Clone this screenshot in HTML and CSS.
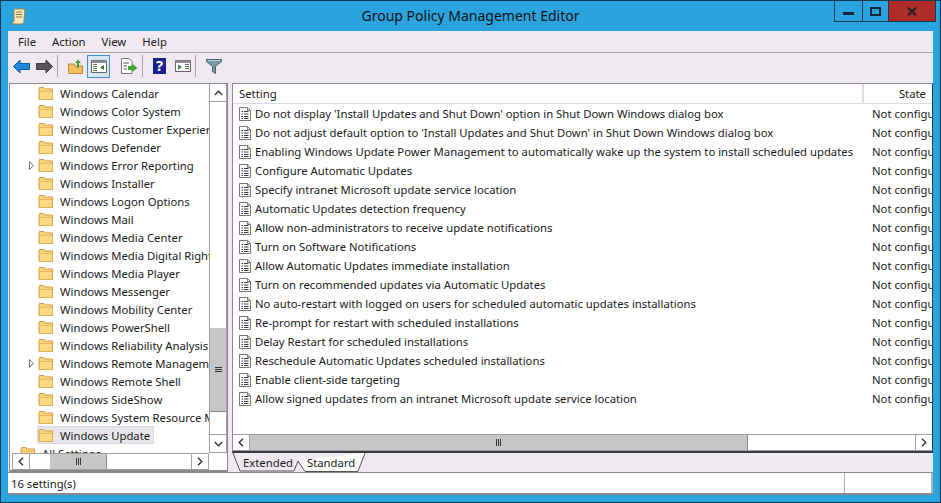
FILE: index.html
```html
<!DOCTYPE html>
<html lang="en">
<head>
	<title>Group Policy Management Editor</title>
	<meta charset="UTF-8">
	<link rel="stylesheet" href="styles.css">
</head>
<body>

<svg class="defs" width="0" height="0">
	<symbol id="folder" viewBox="0 0 16 15">
		<path d="M1 3.5 L1.5 1.5 H6 L7 3 H14.5 V13.5 H1 Z" fill="#f6d27a" stroke="#cf9f3c"/>
		<path d="M1.5 5.5 H14.5 V13.5 H1.5 Z" fill="#fbd883" stroke="#d8a845" stroke-width=".6"/>
	</symbol>
	<symbol id="setting" viewBox="0 0 12 14">
		<path d="M.5 .5 H8.5 L11.5 3.5 V13.5 H.5 Z M8.5 .5 V3.5 H11.5" fill="#fff" stroke="#77777d"/>
		<path d="M2.5 4.5 H4 M5 4.5 H9.5 M2.5 7 H4 M5 7 H9.5 M2.5 9.5 H4 M5 9.5 H9.5 M2.5 11.5 H4 M5 11.5 H9.5" stroke="#3c3c46" stroke-width="1.1"/>
	</symbol>
</svg>

<div class="window">
	<header class="titlebar">
		<svg class="app-icon" width="16" height="18" viewBox="0 0 16 18">
			<path d="M3 1 H14 L13 12 Q13 15 11 16 H2 Q1 14 3 13 Z" fill="#f7e9b8" stroke="#a08a50"/>
			<path d="M5 4 H11 M5 6.5 H11 M5 9 H11" stroke="#8a7a50"/>
		</svg>
		<h1 class="title">Group Policy Management Editor</h1>
		<div class="controls">
			<div class="ctl"><span class="min-glyph"></span></div>
			<div class="ctl ctl-max"><span class="max-glyph"></span></div>
			<div class="ctl ctl-close">
				<svg width="10" height="9" viewBox="0 0 10 9"><path d="M1 .5 L9 8.5 M9 .5 L1 8.5" stroke="#222" stroke-width="2.2"/></svg>
			</div>
		</div>
	</header>

	<div class="client">
		<nav class="menubar">
			<span>File</span><span>Action</span><span>View</span><span>Help</span>
		</nav>

		<div class="toolbar">
			<svg class="tool t-back" width="17" height="15" viewBox="0 0 17 15"><path d="M.5 7.5 L7 1 V4.5 H16.5 V10.5 H7 V14 Z" fill="#1f86d8" stroke="#0f5aa8"/></svg>
			<svg class="tool t-fwd" width="17" height="15" viewBox="0 0 17 15"><path d="M16.5 7.5 L10 1 V4.5 H.5 V10.5 H10 V14 Z" fill="#55555a" stroke="#3a3a3e"/></svg>
			<i class="sep"></i>
			<svg class="tool t-up" width="15" height="15" viewBox="0 0 15 15"><path d="M.5 5 H6 L7 7 H14.5 V14.5 H.5 Z" fill="#f2c260" stroke="#b98b30"/><path d="M9 10 V4 H7 L10 .5 L13 4 H11 V8 Z" fill="#3f9a33"/></svg>
			<div class="tool-on">
				<svg width="16" height="13" viewBox="0 0 16 13"><path d="M.5 .5 H15.5 V12.5 H.5 Z" fill="#fff" stroke="#666"/><path d="M.5 .5 H15.5 V3 H.5 Z" fill="#8c8c92"/><path d="M2 4.5 H6 M2 6.5 H6 M2 8.5 H6 M2 10.5 H6" stroke="#5b8a58"/><path d="M13 5 V10 L9 7.5 Z" fill="#3a7a3a"/></svg>
			</div>
			<svg class="tool t-export" width="17" height="16" viewBox="0 0 17 16"><path d="M.5 .5 H8 L11 3.5 V15.5 H.5 Z" fill="#fff" stroke="#777"/><path d="M2.5 5 H8 M2.5 8 H6 M2.5 11 H6" stroke="#555"/><path d="M7 8 H11 V5.5 L16.5 10 L11 14 V12 H7 Z" fill="#3ea82f"/></svg>
			<i class="sep"></i>
			<svg class="tool t-help" width="13" height="16" viewBox="0 0 13 16"><path d="M0 0 H13 V16 H0 Z" fill="#17208c"/><text x="6.5" y="13" class="help-q">?</text></svg>
			<svg class="tool t-sheet" width="16" height="12" viewBox="0 0 16 12"><path d="M.5 .5 H15.5 V11.5 H.5 Z" fill="#fff" stroke="#666"/><path d="M.5 .5 H15.5 V3 H.5 Z" fill="#8c8c92"/><path d="M10 4.5 H14 M10 6.5 H14 M10 8.5 H14" stroke="#666"/><path d="M3 4.5 V9.5 L7 7 Z" fill="#3a7a3a"/></svg>
			<i class="sep"></i>
			<svg class="tool t-filter" width="16" height="15" viewBox="0 0 16 15"><path d="M.5 .5 H15.5 V2.5 L9.5 7.5 V14.5 L6.5 12.5 V7.5 L.5 2.5 Z" fill="#7a98a6" stroke="#46626e"/><path d="M2 1.5 H14" stroke="#c3d3da"/></svg>
		</div>

		<div class="panes">
			<section class="tree-pane">
				<div class="tree-main">
					<ul class="tree" id="tree"></ul>
					<div class="vscroll">
						<div class="sb-btn sb-top"><svg width="9" height="6" viewBox="0 0 9 6"><path d="M.8 5 L4.5 1.2 L8.2 5" fill="none" stroke="#333" stroke-width="1.4"/></svg></div>
						<div class="vtrack">
							<div class="vthumb"><b class="grip-h"></b><b class="grip-h"></b><b class="grip-h"></b></div>
						</div>
						<div class="sb-btn sb-bot"><svg width="9" height="6" viewBox="0 0 9 6"><path d="M.8 1 L4.5 4.8 L8.2 1" fill="none" stroke="#333" stroke-width="1.4"/></svg></div>
					</div>
				</div>
				<div class="hscroll tree-hscroll">
					<div class="sb-btn sb-side"><svg width="6" height="9" viewBox="0 0 6 9"><path d="M5 .8 L1.2 4.5 L5 8.2" fill="none" stroke="#333" stroke-width="1.4"/></svg></div>
					<div class="htrack">
						<div class="hthumb tree-thumb"><b class="grip-v"></b><b class="grip-v"></b><b class="grip-v"></b></div>
					</div>
					<div class="sb-btn sb-side sb-right"><svg width="6" height="9" viewBox="0 0 6 9"><path d="M1 .8 L4.8 4.5 L1 8.2" fill="none" stroke="#333" stroke-width="1.4"/></svg></div>
				</div>
			</section>

			<section class="list-col">
				<div class="list-pane">
					<div class="list-head">
						<div class="col-setting">Setting</div>
						<div class="col-state">State</div>
					</div>
					<div class="list-rows" id="rows"></div>
					<div class="hscroll list-hscroll">
						<div class="sb-btn sb-side"><svg width="6" height="9" viewBox="0 0 6 9"><path d="M5 .8 L1.2 4.5 L5 8.2" fill="none" stroke="#333" stroke-width="1.4"/></svg></div>
						<div class="htrack">
							<div class="hthumb list-thumb"><b class="grip-v"></b><b class="grip-v"></b><b class="grip-v"></b></div>
						</div>
						<div class="sb-btn sb-side sb-right"><svg width="6" height="9" viewBox="0 0 6 9"><path d="M1 .8 L4.8 4.5 L1 8.2" fill="none" stroke="#333" stroke-width="1.4"/></svg></div>
					</div>
				</div>
				<div class="tabs">
					<svg class="tabs-svg" width="140" height="19" viewBox="0 0 140 19">
						<path d="M1 0 L8 18 H62 L66 8 L70 13" fill="none" stroke="#555"/>
						<path d="M66 8 L73 18.5 H126 L133 0" fill="#fff" stroke="#555"/>
						<text x="11" y="14" class="tab-text">Extended</text>
						<text x="75" y="14" class="tab-text">Standard</text>
					</svg>
				</div>
			</section>
		</div>

		<footer class="status">
			<div class="status-main">16 setting(s)</div>
			<div class="status-end"></div>
		</footer>
	</div>
</div>

<script>
	var folders = ['Windows Calendar', 'Windows Color System', 'Windows Customer Experience', 'Windows Defender', 'Windows Error Reporting', 'Windows Installer', 'Windows Logon Options', 'Windows Mail', 'Windows Media Center', 'Windows Media Digital Rights', 'Windows Media Player', 'Windows Messenger', 'Windows Mobility Center', 'Windows PowerShell', 'Windows Reliability Analysis', 'Windows Remote Management', 'Windows Remote Shell', 'Windows SideShow', 'Windows System Resource Manager', 'Windows Update'];
	var expandable = ['Windows Error Reporting', 'Windows Remote Management'];

	var settings = [
		"Do not display 'Install Updates and Shut Down' option in Shut Down Windows dialog box",
		"Do not adjust default option to 'Install Updates and Shut Down' in Shut Down Windows dialog box",
		"Enabling Windows Update Power Management to automatically wake up the system to install scheduled updates",
		"Configure Automatic Updates",
		"Specify intranet Microsoft update service location",
		"Automatic Updates detection frequency",
		"Allow non-administrators to receive update notifications",
		"Turn on Software Notifications",
		"Allow Automatic Updates immediate installation",
		"Turn on recommended updates via Automatic Updates",
		"No auto-restart with logged on users for scheduled automatic updates installations",
		"Re-prompt for restart with scheduled installations",
		"Delay Restart for scheduled installations",
		"Reschedule Automatic Updates scheduled installations",
		"Enable client-side targeting",
		"Allow signed updates from an intranet Microsoft update service location"
	];

	var treeHtml = '';
	folders.forEach(function(name) {
		var arrow = expandable.indexOf(name) > -1 ? '<svg class="expander" width="5" height="9" viewBox="0 0 5 9"><path d="M.5 .5 L4.5 4.5 L.5 8.5 Z" fill="#fff" stroke="#777"/></svg>' : '';
		var cls = name === 'Windows Update' ? 'node-label selected' : 'node-label';
		treeHtml += '<li class="node"><span class="twist">' + arrow + '</span><span class="' + cls + '"><svg class="folder" width="16" height="15"><use href="#folder"/></svg><span class="node-text">' + name + '</span></span></li>';
	});
	treeHtml += '<li class="node node-root"><span class="node-label"><svg class="folder" width="16" height="15"><use href="#folder"/></svg><span class="node-text">All Settings</span></span></li>';
	document.getElementById('tree').innerHTML = treeHtml;

	var rowHtml = '';
	settings.forEach(function(text) {
		rowHtml += '<div class="row"><div class="col-setting"><svg class="doc" width="12" height="14"><use href="#setting"/></svg><span>' + text + '</span></div><div class="col-state">Not configured</div></div>';
	});
	document.getElementById('rows').innerHTML = rowHtml;
</script>
</body>
</html>
```

FILE: styles.css
```css
body {
	margin: 0;
	background-color: #2ba3df;
	font-family: "Noto Sans", sans-serif;
	font-size: 11.3px;
	color: #1a1a1a;
}
.defs {
	display: block;
	height: 0;
}

.window {
	box-sizing: border-box;
	width: 941px;
	height: 503px;
	border: 1px solid #123a55;
	display: flex;
	flex-direction: column;
	overflow: hidden;
}

/* title bar */
.titlebar {
	height: 30px;
	flex: none;
	display: flex;
	align-items: flex-start;
}
.app-icon {
	margin: 7px 0 0 10px;
}
.title {
	flex: 1;
	margin: 5px 0 0 0;
	padding-left: 80px;
	text-align: center;
	font-size: 14px;
	font-weight: normal;
	line-height: 20px;
	color: #111;
}
.controls {
	display: flex;
	height: 21px;
	margin-right: 4px;
	border: 1px solid #123a55;
	border-top: 0;
	box-sizing: border-box;
}
.ctl {
	width: 27px;
	display: flex;
	align-items: center;
	justify-content: center;
	border-right: 1px solid #123a55;
}
.ctl-max {
	width: 25px;
}
.ctl-close {
	width: 46px;
	background-color: #b02c26;
	border-right: 0;
}
.min-glyph {
	width: 11px;
	height: 3px;
	margin-top: 5px;
	background-color: #10263c;
}
.max-glyph {
	width: 7px;
	height: 5px;
	border: 2px solid #10263c;
}

.client {
	flex: 1;
	display: flex;
	flex-direction: column;
	margin: 0 7px 7px 7px;
	min-height: 0;
	background-color: #f0e9f2;
}

/* menu */
.menubar {
	height: 22px;
	flex: none;
	display: flex;
	align-items: center;
	gap: 16px;
	padding-left: 10px;
	border-bottom: 1px solid #a8a4ac;
	box-sizing: border-box;
}

/* toolbar */
.toolbar {
	height: 30px;
	flex: none;
	display: flex;
	align-items: center;
	padding-bottom: 4px;
	box-sizing: border-box;
}
.tool {
	flex: none;
}
.t-back {
	margin-left: 5px;
}
.t-fwd {
	margin-left: 6px;
}
.sep {
	width: 1px;
	height: 22px;
	background-color: #a8a4ac;
	margin: 0 10px 0 4px;
}
.tool-on {
	width: 23px;
	height: 23px;
	margin-left: 4px;
	display: flex;
	align-items: center;
	justify-content: center;
	background-color: #d6e6f4;
	border: 1px solid #4a90c8;
	box-sizing: border-box;
}
.t-export {
	margin-left: 11px;
}
.t-sheet {
	margin-left: 9px;
}
.help-q {
	fill: #fff;
	font-size: 15px;
	font-weight: bold;
	text-anchor: middle;
}

/* panes */
.panes {
	flex: 1;
	display: flex;
	min-height: 0;
}
.tree-pane {
	width: 219px;
	flex: none;
	margin-left: 1px;
	display: flex;
	flex-direction: column;
	background-color: #fff;
	border: 1px solid #8a8a8e;
	border-bottom-width: 2px;
	box-sizing: border-box;
}
.tree-main {
	flex: 1;
	display: flex;
	min-height: 0;
}
.tree {
	flex: 1;
	min-width: 0;
	margin: 0;
	padding: 0;
	list-style-type: none;
	overflow: hidden;
}
.node {
	height: 18px;
	display: flex;
	align-items: center;
	white-space: nowrap;
}
.twist {
	width: 27px;
	flex: none;
	display: flex;
	justify-content: flex-end;
	padding-right: 3px;
	box-sizing: border-box;
}
.node-label {
	display: flex;
	align-items: center;
	height: 18px;
	padding-left: 1px;
}
.node-label.selected {
	background-color: #e9e5ec;
	outline: 1px solid #dcd8e0;
	outline-offset: -1px;
	padding-right: 4px;
}
.folder {
	flex: none;
}
.node-text {
	margin-left: 6px;
}
.node-root {
	padding-left: 9px;
}

/* scrollbars */
.vscroll {
	width: 18px;
	flex: none;
	display: flex;
	flex-direction: column;
	border-left: 1px solid #a0a0a0;
	border-right: 1px solid #a0a0a0;
	box-sizing: border-box;
	background-color: #fff;
}
.sb-btn {
	display: flex;
	align-items: center;
	justify-content: center;
	flex: none;
	background-color: #fff;
}
.sb-top {
	height: 17px;
	border-bottom: 1px solid #a0a0a0;
}
.sb-bot {
	height: 17px;
	border-top: 1px solid #a0a0a0;
	border-bottom: 1px solid #a0a0a0;
}
.vtrack {
	flex: 1;
	display: flex;
	flex-direction: column;
	justify-content: flex-end;
	padding-bottom: 22px;
}
.vthumb {
	height: 83px;
	background-color: #c6c6c6;
	border-bottom: 1px solid #8a8a8a;
	display: flex;
	flex-direction: column;
	align-items: center;
	justify-content: center;
	gap: 1px;
}
.grip-h {
	width: 7px;
	height: 1px;
	background-color: #333;
}
.hscroll {
	display: flex;
	height: 17px;
	flex: none;
	box-sizing: border-box;
	background-color: #fff;
	border-top: 1px solid #a0a0a0;
	border-bottom: 1px solid #a0a0a0;
}
.tree-hscroll {
	margin: 0 18px 0 2px;
	border-left: 1px solid #a0a0a0;
	border-right: 1px solid #a0a0a0;
}
.sb-side {
	width: 16px;
	border-right: 1px solid #a0a0a0;
}
.sb-right {
	border-right: 0;
	border-left: 1px solid #a0a0a0;
}
.htrack {
	flex: 1;
	display: flex;
	min-width: 0;
}
.hthumb {
	background-color: #c6c6c6;
	display: flex;
	align-items: center;
	justify-content: center;
	gap: 1px;
	border-right: 1px solid #8a8a8a;
	box-sizing: border-box;
}
.grip-v {
	width: 1px;
	height: 7px;
	background-color: #333;
}
.tree-thumb {
	width: 57px;
	margin-left: 20px;
}
.list-thumb {
	width: 498px;
}

/* settings list */
.list-col {
	flex: 1;
	min-width: 0;
	display: flex;
	flex-direction: column;
	margin-left: 4px;
}
.list-pane {
	flex: 1;
	min-height: 0;
	display: flex;
	flex-direction: column;
	background-color: #fff;
	border: 1px solid #8a8a8e;
	border-bottom: 2px solid #3a3a3e;
	border-right-color: #3a3a3e;
	box-sizing: border-box;
}
.list-head {
	height: 20px;
	flex: none;
	display: flex;
	border-bottom: 1px solid #dcdcdc;
	box-sizing: border-box;
}
.list-head .col-setting {
	padding-left: 6px;
	border-right: 2px solid #e0dce2;
	line-height: 20px;
	box-sizing: border-box;
}
.list-head .col-state {
	flex: 1;
	text-align: right;
	padding-right: 6px;
	line-height: 20px;
}
.col-setting {
	width: 631px;
	flex: none;
}
.list-rows {
	flex: 1;
	min-height: 0;
	overflow: hidden;
}
.row {
	height: 19px;
	display: flex;
	align-items: center;
	white-space: nowrap;
}
.row .col-setting {
	display: flex;
	align-items: center;
	padding-left: 6px;
	box-sizing: border-box;
}
.doc {
	flex: none;
	margin-right: 4px;
}
.row .col-state {
	padding-left: 8px;
}
.tabs {
	height: 19px;
	flex: none;
}
.tabs-svg {
	display: block;
}
.tab-text {
	font-size: 11.3px;
	fill: #1a1a1a;
}

/* status bar */
.status {
	height: 23px;
	flex: none;
	display: flex;
	background-color: #fff;
	border-top: 1px solid #8a8a8e;
	border-bottom: 2px solid #8a8a8e;
	box-sizing: border-box;
}
.status-main {
	width: 837px;
	padding-left: 3px;
	line-height: 21px;
	border-right: 1px solid #b0b0b0;
	box-sizing: border-box;
}
.status-end {
	flex: 1;
	border-right: 2px solid #b0b0b0;
}
```
